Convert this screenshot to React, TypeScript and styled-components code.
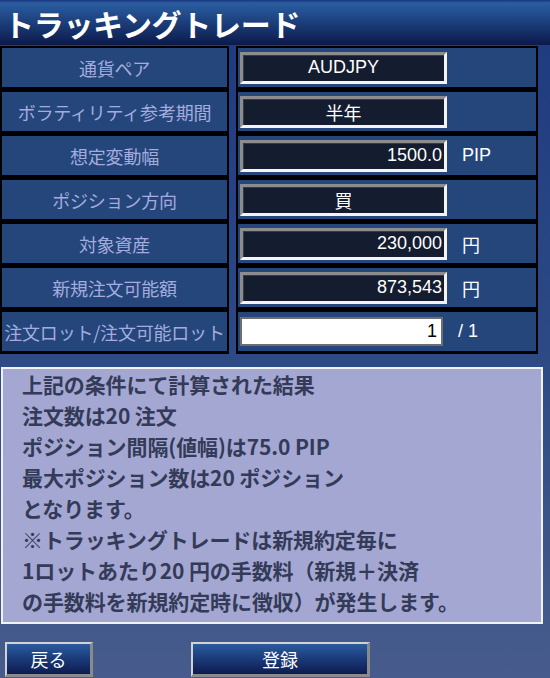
import {Fragment} from "react";
import styled, {createGlobalStyle} from "styled-components";

const GlobalStyle = createGlobalStyle`
  html, body {
    margin: 0;
    padding: 0;
  }
  body {
    font-family: "Noto Sans CJK JP", "Noto Sans", sans-serif;
  }
`;

const Page = styled.div`
  width: 550px;
  min-height: 678px;
  background: linear-gradient(to bottom, #1e3a80 0%, #2c4985 50%, #475c8c 100%);
  overflow: hidden;
`;

const Header = styled.div`
  height: 45px;
  border-bottom: 1px solid #1f3d85;
  background: linear-gradient(to bottom, #1b3580 0px, #2a5ea0 3px, #1c3f7c 22px, #0c1a4a 100%);
  display: flex;
  align-items: center;
  padding-left: 4px;
`;

const Title = styled.h1`
  margin: 0;
  color: #ffffff;
  font-size: 30px;
  font-weight: bold;
  letter-spacing: -0.3px;
  line-height: 1;
`;

const Table = styled.div`
  display: grid;
  grid-template-columns: 229px 302px;
  column-gap: 7px;
`;

const Cell = styled.div`
  height: 44px;
  box-sizing: border-box;
  border: 2px solid #000;
  border-bottom-width: 3px;
  background: #24467a;
  display: flex;
  align-items: center;
`;

const Label = styled(Cell)`
  justify-content: center;
  color: #a4acdf;
  font-size: 18px;
  white-space: nowrap;
  letter-spacing: -0.2px;
`;

const Field = styled(Cell)`
  padding-left: 2px;
  gap: 15px;
`;

const Input = styled.div<{ $align: "center" | "right" }>`
  width: 207px;
  height: 32px;
  box-sizing: border-box;
  border-style: solid;
  border-width: 3px;
  border-color: #8c8c8c #f4f4f4 #f4f4f4 #8c8c8c;
  box-shadow: inset 1px 1px 0 #3a3a3a;
  background: #141c30;
  color: #ffffff;
  font-family: "Liberation Sans", "Noto Sans CJK JP", sans-serif;
  font-size: 18px;
  display: flex;
  align-items: center;
  justify-content: ${p => (p.$align === "right" ? "flex-end" : "center")};
  padding-right: ${p => (p.$align === "right" ? "2px" : "0")};
`;

const LotInput = styled.div`
  width: 203px;
  height: 29px;
  box-sizing: border-box;
  border: 2px solid #6e6e6e;
  background: #ffffff;
  color: #000;
  font-family: "Liberation Sans", sans-serif;
  font-size: 18px;
  display: flex;
  align-items: center;
  justify-content: flex-end;
  padding-right: 4px;
`;

const Unit = styled.span`
  color: #ffffff;
  font-family: "Liberation Sans", "Noto Sans CJK JP", sans-serif;
  font-size: 18px;
`;

const Result = styled.div`
  margin: 13px 0 0 1px;
  width: 542px;
  height: 257px;
  box-sizing: border-box;
  border: 2px solid #f2f2f6;
  background: #a5a7d3;
  padding: 0 0 0 19px;
  color: #333b58;
  font-size: 21px;
  font-weight: bold;
  line-height: 31px;
  letter-spacing: -0.1px;
`;

const Line = styled.div`
  white-space: nowrap;
`;

const Buttons = styled.div`
  display: flex;
  gap: 98px;
  margin-top: 18px;
  padding-left: 5px;
`;

const Button = styled.button<{ $width: number }>`
  width: ${p => p.$width}px;
  height: 35px;
  box-sizing: border-box;
  border-style: solid;
  border-width: 2px 3px 3px 2px;
  border-color: #d2d2d2 #8a8a8a #8a8a8a #d2d2d2;
  background: linear-gradient(to bottom, #2b5c9e 0%, #1a3a78 50%, #0d1b4f 100%);
  color: #ffffff;
  font-family: "Noto Sans CJK JP", sans-serif;
  font-size: 18px;
  padding: 0;
  cursor: pointer;
`;

type Row = { label: string; value: string; align: "center" | "right"; unit?: string };

const rows: Row[] = [
    {label: "通貨ペア", value: "AUDJPY", align: "center"},
    {label: "ボラティリティ参考期間", value: "半年", align: "center"},
    {label: "想定変動幅", value: "1500.0", align: "right", unit: "PIP"},
    {label: "ポジション方向", value: "買", align: "center"},
    {label: "対象資産", value: "230,000", align: "right", unit: "円"},
    {label: "新規注文可能額", value: "873,543", align: "right", unit: "円"},
];

const resultLines = [
    "上記の条件にて計算された結果",
    "注文数は20 注文",
    "ポジション間隔(値幅)は75.0 PIP",
    "最大ポジション数は20 ポジション",
    "となります。",
    "※トラッキングトレードは新規約定毎に",
    "1ロットあたり20 円の手数料（新規＋決済",
    "の手数料を新規約定時に徴収）が発生します。",
];

export default function App() {
    return (
        <Page>
            <GlobalStyle/>
            <Header>
                <Title>トラッキングトレード</Title>
            </Header>
            <Table>
                {rows.map(r => (
                    <Fragment key={r.label}>
                        <Label>{r.label}</Label>
                        <Field>
                            <Input $align={r.align}>{r.value}</Input>
                            {r.unit && <Unit>{r.unit}</Unit>}
                        </Field>
                    </Fragment>
                ))}
                <Label>注文ロット/注文可能ロット</Label>
                <Field>
                    <LotInput>1</LotInput>
                    <Unit>/ 1</Unit>
                </Field>
            </Table>
            <Result>
                {resultLines.map(l => <Line key={l}>{l}</Line>)}
            </Result>
            <Buttons>
                <Button $width={88}>戻る</Button>
                <Button $width={179}>登録</Button>
            </Buttons>
        </Page>
    )
}
